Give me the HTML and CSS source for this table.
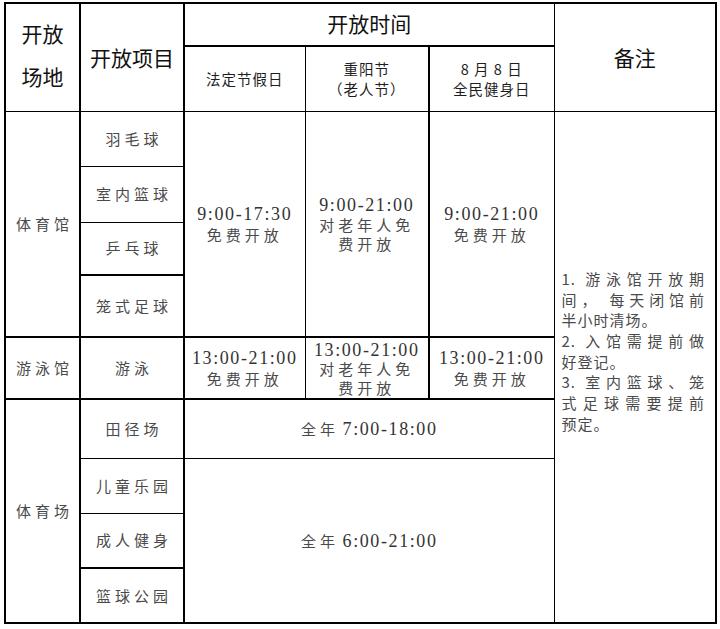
FILE: index.html
```html
<!DOCTYPE html>
<html lang="zh-CN">
<head>
<meta charset="utf-8">
<title>开放时间</title>
<link rel="stylesheet" href="styles.css">
</head>
<body>
<table class="t">
  <colgroup>
    <col class="c1"><col class="c2"><col class="c3"><col class="c4"><col class="c5"><col class="c6">
  </colgroup>
  <tr class="r1">
    <td rowspan="2" class="h venue-h">开放<br>场地</td>
    <td rowspan="2" class="h item">开放项目</td>
    <td colspan="3" class="h span-h">开放时间</td>
    <td rowspan="2" class="h">备注</td>
  </tr>
  <tr class="r2">
    <td class="sub top2">法定节假日</td>
    <td class="sub top2">重阳节<br>（老人节）</td>
    <td class="sub top2 lthick">8 月 8 日<br>全民健身日</td>
  </tr>
  <tr class="r3">
    <td rowspan="4" class="cn">体育馆</td>
    <td class="cn item">羽毛球</td>
    <td rowspan="4" class="tm"><span class="d">9:00-17:30</span><br><span class="cn-in">免费开放</span></td>
    <td rowspan="4" class="tm tm3"><span class="d">9:00-21:00</span><br><span class="cn-in">对老年人免</span><br><span class="cn-in">费开放</span></td>
    <td rowspan="4" class="tm lthick"><span class="d">9:00-21:00</span><br><span class="cn-in">免费开放</span></td>
    <td rowspan="11" class="note">
      <div class="ln j">1. 游泳馆开放期</div>
      <div class="ln j">间， 每天闭馆前</div>
      <div class="ln">半小时清场。</div>
      <div class="ln j">2. 入馆需提前做</div>
      <div class="ln">好登记。</div>
      <div class="ln j">3. 室内篮球、笼</div>
      <div class="ln j">式足球需要提前</div>
      <div class="ln">预定。</div>
    </td>
  </tr>
  <tr class="r4">
    <td class="cn item">室内篮球</td>
  </tr>
  <tr class="r5">
    <td class="cn item">乒乓球</td>
  </tr>
  <tr class="r6">
    <td class="cn item top2">笼式足球</td>
  </tr>
  <tr class="r7 band">
    <td class="cn">游泳馆</td>
    <td class="cn item">游泳</td>
    <td class="tm"><span class="d">13:00-21:00</span><br><span class="cn-in">免费开放</span></td>
    <td class="tm tm3 tight"><span class="d">13:00-21:00</span><br><span class="cn-in">对老年人免</span><br><span class="cn-in">费开放</span></td>
    <td class="tm lthick"><span class="d">13:00-21:00</span><br><span class="cn-in">免费开放</span></td>
  </tr>
  <tr class="r8">
    <td rowspan="4" class="cn">体育场</td>
    <td class="cn item">田径场</td>
    <td colspan="3" class="tm"><span class="cn-in">全年</span> <span class="d">7:00-18:00</span></td>
  </tr>
  <tr class="r9">
    <td class="cn item">儿童乐园</td>
    <td colspan="3" rowspan="3" class="tm"><span class="cn-in">全年</span> <span class="d">6:00-21:00</span></td>
  </tr>
  <tr class="r10">
    <td class="cn item">成人健身</td>
  </tr>
  <tr class="r11">
    <td class="cn item top2">篮球公园</td>
  </tr>
</table>
</body>
</html>
```

FILE: styles.css
```css
html, body {
  margin: 0;
  background: #ffffff;
}
body {
  padding: 2px 0 0 4px;
  font-family: "Noto Sans CJK SC", "Noto Sans", sans-serif;
}
.t {
  border-collapse: collapse;
  table-layout: fixed;
  width: 713px;
  border: 2px solid #000;
}
.c1 { width: 75px; }
.c2 { width: 104px; }
.c3 { width: 121px; }
.c4 { width: 124px; }
.c5 { width: 125px; }
.c6 { width: 162px; }

.r1 { height: 43px; }
.r2 { height: 65px; }
.r3 { height: 55px; }
.r4 { height: 56px; }
.r5 { height: 53px; }
.r6 { height: 62px; }
.r7 { height: 62px; }
.r8 { height: 59px; }
.r9 { height: 55px; }
.r10 { height: 55px; }
.r11 { height: 55px; }

.t td {
  border: 1px solid #000;
  padding: 0;
  text-align: center;
  vertical-align: middle;
  color: #4a4a4a;
  overflow: hidden;
}
.t td.item {
  border-left: 2px solid #000;
  border-right: 2px solid #000;
}
.t td.lthick {
  border-left: 2px solid #000;
}
.t td.top2 {
  border-top: 2px solid #000;
}
.t .band td {
  border-top: 2px solid #000;
  border-bottom: 2px solid #000;
}

.h {
  font-size: 21px;
  line-height: 28px;
  color: #111 !important;
}
.span-h {
  padding-bottom: 4px !important;
}
.venue-h {
  line-height: 43px;
  padding-bottom: 4px !important;
}
.sub {
  font-size: 14.5px;
  line-height: 20px;
  letter-spacing: 1px;
  color: #1e1e1e !important;
}

.cn {
  font-size: 15px;
  letter-spacing: 4px;
  padding-left: 4px !important;
  line-height: 20px;
}
.tm {
  line-height: 20px;
}
.tm3 {
  line-height: 19px;
}
.tm3.tight {
  line-height: 18px;
}
.d {
  font-family: "Liberation Serif", serif;
  font-size: 18px;
  letter-spacing: 1.6px;
  color: #333;
}
.cn-in {
  font-size: 15px;
  letter-spacing: 4px;
}

.t td.note {
  padding: 0 10px 30px 7px;
  text-align: left;
}
.ln {
  font-size: 15px;
  line-height: 20.7px;
  letter-spacing: 1px;
  white-space: nowrap;
}
.ln.j {
  text-align: justify;
  text-align-last: justify;
  white-space: normal;
}
```
